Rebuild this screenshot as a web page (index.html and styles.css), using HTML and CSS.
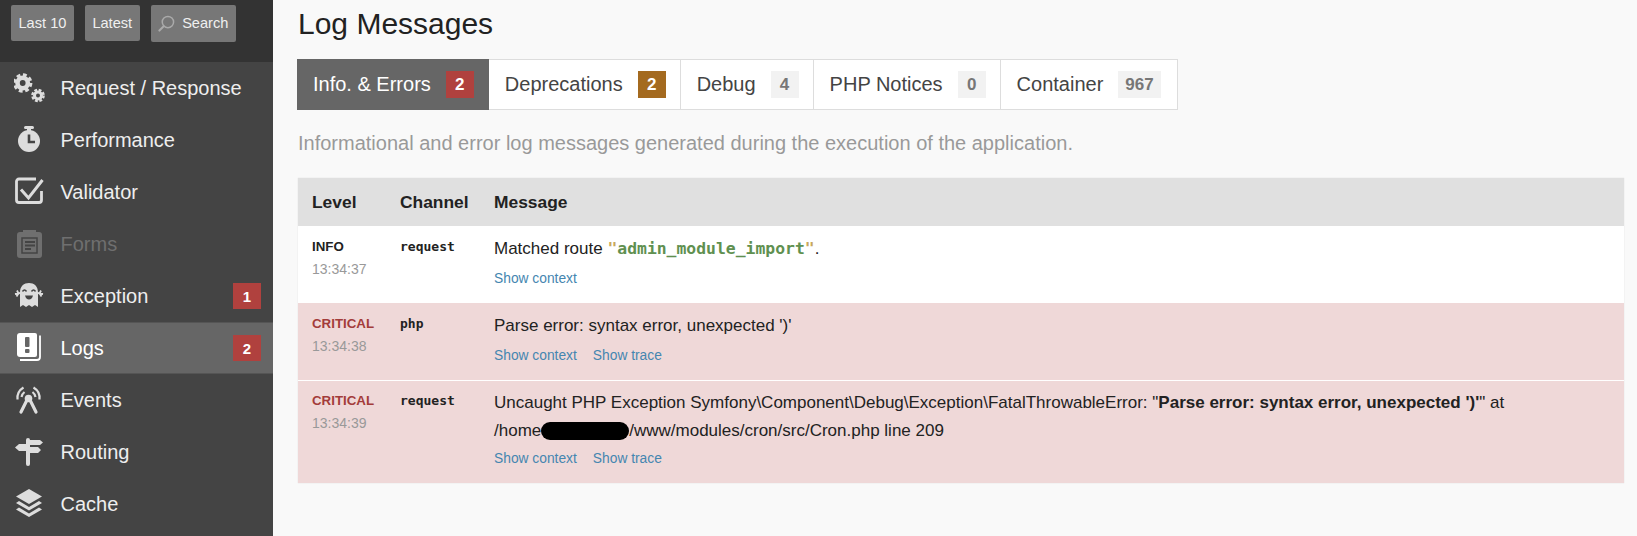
FILE: index.html
```html
<!DOCTYPE html>
<html lang="en">
<head>
<meta charset="utf-8">
<title>Log Messages</title>
<link rel="stylesheet" href="styles.css">
</head>
<body>
<div class="page">
  <aside class="sidebar">
    <div class="shortcuts">
      <a class="btn">Last 10</a>
      <a class="btn">Latest</a>
      <a class="btn btn-search">
        <svg class="search-icon" viewBox="0 0 18 18"><circle cx="10.5" cy="7.5" r="6" fill="none" stroke="#aaa" stroke-width="1.6"/><path d="M6 12 1.5 16.5" stroke="#aaa" stroke-width="2.2" stroke-linecap="round"/></svg>
        Search
      </a>
    </div>
    <nav class="menu">
      <a class="item">
        <svg class="icon" viewBox="0 0 32 32"><circle cx="8.700" cy="11" r="8.200" fill="none" stroke="#ddd" stroke-width="3" stroke-dasharray="3.800 2.640"/><circle cx="8.700" cy="11" r="5.200" fill="none" stroke="#ddd" stroke-width="4.600"/><circle cx="24" cy="23.500" r="5.600" fill="none" stroke="#ddd" stroke-width="2.400" stroke-dasharray="2.800 1.600"/><circle cx="24" cy="23.500" r="3.500" fill="none" stroke="#ddd" stroke-width="3"/></svg>
        <span class="label">Request / Response</span>
      </a>
      <a class="item">
        <svg class="icon" viewBox="0 0 32 32"><rect x="10" y="2" width="10" height="3" rx="1.5" fill="#ddd"/><rect x="13" y="4" width="4" height="4" fill="#ddd"/><circle cx="15" cy="17" r="11" fill="#ddd"/><path d="M15 10.5V18H21" fill="none" stroke="#444" stroke-width="2.6"/></svg>
        <span class="label">Performance</span>
      </a>
      <a class="item">
        <svg class="icon" viewBox="0 0 32 32"><path d="M22 3H5a2.500 2.500 0 0 0-2.500 2.500V24A2.500 2.500 0 0 0 5 26.500H25a2.500 2.500 0 0 0 2.500-2.500V15" fill="none" stroke="#ddd" stroke-width="2.800"/><path d="M7 13.500 14.500 22 28.500 4" fill="none" stroke="#ddd" stroke-width="3"/></svg>
        <span class="label">Validator</span>
      </a>
      <a class="item item-disabled">
        <svg class="icon" viewBox="0 0 32 32"><path d="M9 4h-3a3 3 0 0 0-3 3v20a3 3 0 0 0 3 3h19a3 3 0 0 0 3-3V7a3 3 0 0 0-3-3h-3V2h-13z" fill="#6f6f6f"/><rect x="8" y="10" width="15" height="15" fill="none" stroke="#444" stroke-width="1.500"/><path d="M11 14h10M11 17.500h10M11 21h6" stroke="#444" stroke-width="2"/></svg>
        <span class="label">Forms</span>
      </a>
      <a class="item">
        <svg class="icon" viewBox="0 0 32 32"><path d="M6 12.500C6 6 10 3 15 3s9 3 9 9.500V27l-3-2-3 2-3-2-3 2-3-2-3 2z" fill="#ddd"/><path d="M6 13 1 14M3 10.500l1.500 3-2 3M24 13l5 1M27 10.500l-1.500 3 2 3" fill="none" stroke="#ddd" stroke-width="1.800"/><path d="M8.500 11.500q2-3 4 0M17.500 11.500q2-3 4 0" fill="none" stroke="#444" stroke-width="1.500"/><path d="M11 15.500h8q-1 4-4 4t-4-4z" fill="#444"/></svg>
        <span class="label">Exception</span>
      </a>
      <a class="item item-active">
        <svg class="icon" viewBox="0 0 32 32"><path d="M6 1h15a2 2 0 0 1 2 2v20a2 2 0 0 1-2 2H6a3 3 0 0 1-3-3V4a3 3 0 0 1 3-3z" fill="#fff"/><path d="M26 3.500V25a3 3 0 0 1-3 3H6" fill="none" stroke="#fff" stroke-width="1.800"/><rect x="11" y="5" width="4.500" height="10" rx="1" fill="#666"/><rect x="11" y="17" width="4.500" height="4" rx="1" fill="#666"/></svg>
        <span class="label">Logs</span>
      </a>
      <a class="item">
        <svg class="icon" viewBox="0 0 32 32"><circle cx="14.500" cy="14.500" r="3.800" fill="#ddd"/><path d="M12.500 17 7 28M16.500 17 22 28" fill="none" stroke="#ddd" stroke-width="3.200" stroke-linecap="round"/><path d="M3.500 15.500A12.500 12.500 0 0 1 9.500 3.500M25.500 15.500A12.500 12.500 0 0 0 19.500 3.500M7.500 13A8 8 0 0 1 10.500 8M21.500 13A8 8 0 0 0 18.500 8" fill="none" stroke="#ddd" stroke-width="2.200"/></svg>
        <span class="label">Events</span>
      </a>
      <a class="item">
        <svg class="icon" viewBox="0 0 32 32"><rect x="12" y="2" width="4" height="28" rx="2" fill="#ddd"/><path d="M12 8H5l-4 3.500L5 15h7z" fill="#ddd"/><path d="M16 4h10l3 2.500L26 9H16zM16 11h8l3 3-3 3h-8z" fill="#ddd"/></svg>
        <span class="label">Routing</span>
      </a>
      <a class="item">
        <svg class="icon" viewBox="0 0 32 32"><path d="M15 1 28 8.500 15 16 2 8.500z" fill="#ddd"/><path d="M5 13 2 15 15 22.500 28 15l-3-2-10 6z" fill="#ddd"/><path d="M5 19.500 2 21.500 15 29l13-7.500-3-2-10 6z" fill="#ddd"/></svg>
        <span class="label">Cache</span>
      </a>
    </nav>
  </aside>

  <main class="content">
    <h2 class="title">Log Messages</h2>

    <div class="tabs">
      <div class="tab tab-active">Info. &amp; Errors <span class="count count-error">2</span></div>
      <div class="tab">Deprecations <span class="count count-warning">2</span></div>
      <div class="tab">Debug <span class="count">4</span></div>
      <div class="tab">PHP Notices <span class="count">0</span></div>
      <div class="tab">Container <span class="count">967</span></div>
    </div>

    <p class="help">Informational and error log messages generated during the execution of the application.</p>

    <table class="logs">
      <thead>
        <tr><th class="col-level">Level</th><th class="col-channel">Channel</th><th>Message</th></tr>
      </thead>
      <tbody>
        <tr>
          <td><div class="level">INFO</div><div class="time">13:34:37</div></td>
          <td><span class="channel">request</span></td>
          <td>
            <div class="msg">Matched route <span class="route"><span class="quote">"</span>admin_module_import<span class="quote">"</span></span>.</div>
            <div class="links"><a class="link">Show context</a></div>
          </td>
        </tr>
        <tr class="critical">
          <td><div class="level level-critical">CRITICAL</div><div class="time">13:34:38</div></td>
          <td><span class="channel">php</span></td>
          <td>
            <div class="msg">Parse error: syntax error, unexpected ')'</div>
            <div class="links"><a class="link">Show context</a><a class="link">Show trace</a></div>
          </td>
        </tr>
        <tr class="critical">
          <td><div class="level level-critical">CRITICAL</div><div class="time">13:34:39</div></td>
          <td><span class="channel">request</span></td>
          <td>
            <div class="msg">Uncaught PHP Exception Symfony\Component\Debug\Exception\FatalThrowableError: "<b>Parse error: syntax error, unexpected ')'</b>" at <span class="path">/home<span class="redact"></span>/www/modules/cron/src/Cron.php line 209</span></div>
            <div class="links"><a class="link">Show context</a><a class="link">Show trace</a></div>
          </td>
        </tr>
      </tbody>
    </table>
  </main>
</div>
</body>
</html>
```
FILE: styles.css
```css
* { box-sizing: border-box; }
html, body { margin: 0; height: 100%; overflow: hidden; }
body { font-family: "Liberation Sans", Arial, sans-serif; background: #f9f9f9; color: #222; }
.page { display: flex; height: 536px; }

.sidebar { width: 273px; flex: none; background: #444; }
.shortcuts { height: 62px; background: #333; padding: 5px 0 0 11px; display: flex; gap: 11px; align-items: flex-start; }
.btn { height: 36px; padding: 0 7.5px 1px; background: #777; color: #f0f0f0; border-radius: 2px; font-size: 14.6px; display: flex; align-items: center; }
.btn-search { height: 37px; gap: 7px; }
.search-icon { width: 17px; height: 17px; }

.item { height: 52px; display: flex; align-items: center; padding-left: 14px; color: #eee; font-size: 20px; }
.icon { width: 32px; height: 32px; flex: none; margin-right: 14.5px; }
.label { flex: 1; }
.item-disabled { color: #6f6f6f; }
.item-active { background: #666; color: #fff; border-top: 1px solid #555; border-bottom: 1px solid #555; }

.item:nth-child(5)::after, .item-active::after {
  width: 28px; height: 26px; margin-right: 12px; background: #b0413e; color: #fff;
  font-size: 15px; font-weight: bold; display: flex; align-items: center; justify-content: center;
}
.item:nth-child(5)::after { content: "1"; }
.item-active::after { content: "2"; }

.content { flex: 1; min-width: 0; padding: 0 13px 0 25px; }
.title { margin: 0; height: 59px; padding-top: 5px; font-size: 30px; line-height: 38px; font-weight: normal; color: #222; }

.tabs { display: flex; height: 51px; margin-left: -1px; }
.tab { display: flex; align-items: center; gap: 15px; padding: 0 14px 0 16px; background: #fff; border: 1px solid #ddd; border-left: 0; font-size: 20px; color: #444; white-space: nowrap; }
.tab-active { background: #666; color: #fff; border-color: #666; }
.tab:last-child { padding-right: 16px; }
.count { min-width: 28px; height: 27px; padding: 0 7px; display: flex; align-items: center; justify-content: center; background: #f2f2f2; color: #777; font-size: 17px; font-weight: bold; }
.count-error { background: #b0413e; color: #fff; }
.count-warning { background: #a46a1f; color: #fff; }

.help { margin: 0; height: 68px; padding-top: 21px; font-size: 20px; line-height: 24px; color: #999; }

.logs { width: 100%; border-collapse: collapse; table-layout: fixed; background: #fff; box-shadow: 0 0 1px rgba(128,128,128,.25); }
.logs th { height: 48px; padding: 0 0 0 14px; background: #e0e0e0; text-align: left; font-size: 17.4px; color: #222; }
.col-level { width: 88px; }
.col-channel { width: 94px; }
.logs td { padding: 12px 14px 0; vertical-align: top; font-size: 17px; }
.logs td:nth-child(3) { padding-top: 9px; }
.logs tbody tr { height: 77px; }
.logs tbody tr:last-child { height: 103px; }
.logs tbody tr:last-child td { padding-top: 11px; }
.logs tbody tr:last-child td:nth-child(3) { padding-top: 8px; }
.critical { background: #efd8d8; border-top: 1px solid #fff; }
.critical:nth-child(2) { border-top: 0; }

.level { font-size: 13.3px; font-weight: bold; line-height: 18px; color: #222; }
.level-critical { color: #a33c3a; }
.time { margin-top: 4px; font-size: 14px; line-height: 18px; color: #999; }
.channel { display: block; font-family: "DejaVu Sans Mono", monospace; font-size: 13px; font-weight: bold; line-height: 18px; color: #222; }
.msg { line-height: 28px; color: #222; }
.route { font-family: "DejaVu Sans Mono", monospace; font-size: 16.4px; font-weight: bold; color: #609050; }
.quote { color: #c9a85c; }
.path { white-space: nowrap; }
.redact { display: inline-block; width: 88px; height: 18px; background: #000; border-radius: 9px; vertical-align: middle; }
.links { margin-top: 6px; display: flex; gap: 16px; }
.logs tbody tr:last-child .links { margin-top: 4px; }
.link { font-size: 13.8px; line-height: 20px; color: #4586b0; }
```
